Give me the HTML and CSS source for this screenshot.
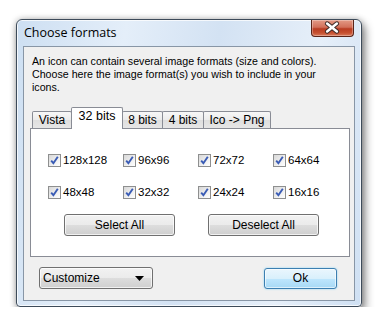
FILE: index.html
```html
<!DOCTYPE html>
<html>
<head>
<meta charset="utf-8">
<link rel="stylesheet" href="styles.css">
</head>
<body>
<div class="window">
  <div class="titlebar">
    <span class="title">Choose formats</span>
    <div class="close">
      <svg width="43" height="17" viewBox="0 0 43 17">
        <path d="M16.5 4.5 L26.5 12.5 M26.5 4.5 L16.5 12.5" stroke="#3b2a28" stroke-width="4.6" stroke-linecap="round"/>
        <path d="M16.5 4.5 L26.5 12.5 M26.5 4.5 L16.5 12.5" stroke="#ffffff" stroke-width="2.6" stroke-linecap="round"/>
      </svg>
    </div>
  </div>
  <div class="client">
    <p class="intro">An icon can contain several image formats (size and colors).<br>Choose here the image format(s) you wish to include in your<br>icons.</p>
    <div class="tabs">
      <div class="tab w40">Vista</div>
      <div class="tab active">32 bits</div>
      <div class="tab w41">8 bits</div>
      <div class="tab w42">4 bits</div>
      <div class="tab w68">Ico -&gt; Png</div>
    </div>
    <div class="panel">
      <div class="grid">
        <label class="cb"><span class="box"><svg width="11" height="11" viewBox="0 0 11 11"><path d="M2.2 5.6 L4.4 8.2 L8.8 1.8" fill="none" stroke="#3a5cb5" stroke-width="1.9"/></svg></span>128x128</label>
        <label class="cb"><span class="box"><svg width="11" height="11" viewBox="0 0 11 11"><path d="M2.2 5.6 L4.4 8.2 L8.8 1.8" fill="none" stroke="#3a5cb5" stroke-width="1.9"/></svg></span>96x96</label>
        <label class="cb"><span class="box"><svg width="11" height="11" viewBox="0 0 11 11"><path d="M2.2 5.6 L4.4 8.2 L8.8 1.8" fill="none" stroke="#3a5cb5" stroke-width="1.9"/></svg></span>72x72</label>
        <label class="cb"><span class="box"><svg width="11" height="11" viewBox="0 0 11 11"><path d="M2.2 5.6 L4.4 8.2 L8.8 1.8" fill="none" stroke="#3a5cb5" stroke-width="1.9"/></svg></span>64x64</label>
        <label class="cb"><span class="box"><svg width="11" height="11" viewBox="0 0 11 11"><path d="M2.2 5.6 L4.4 8.2 L8.8 1.8" fill="none" stroke="#3a5cb5" stroke-width="1.9"/></svg></span>48x48</label>
        <label class="cb"><span class="box"><svg width="11" height="11" viewBox="0 0 11 11"><path d="M2.2 5.6 L4.4 8.2 L8.8 1.8" fill="none" stroke="#3a5cb5" stroke-width="1.9"/></svg></span>32x32</label>
        <label class="cb"><span class="box"><svg width="11" height="11" viewBox="0 0 11 11"><path d="M2.2 5.6 L4.4 8.2 L8.8 1.8" fill="none" stroke="#3a5cb5" stroke-width="1.9"/></svg></span>24x24</label>
        <label class="cb"><span class="box"><svg width="11" height="11" viewBox="0 0 11 11"><path d="M2.2 5.6 L4.4 8.2 L8.8 1.8" fill="none" stroke="#3a5cb5" stroke-width="1.9"/></svg></span>16x16</label>
      </div>
      <div class="btnrow">
        <div class="btn">Select All</div>
        <div class="btn">Deselect All</div>
      </div>
    </div>
    <div class="footer">
      <div class="combo"><span>Customize</span><svg width="9" height="5" viewBox="0 0 9 5"><path d="M0 0 H9 L4.5 5 Z" fill="#000"/></svg></div>
      <div class="ok">Ok</div>
    </div>
  </div>
</div>
</body>
</html>
```

FILE: styles.css
```css
html, body {
  margin: 0;
  background: #ffffff;
}
body {
  padding: 19px 0 0 16px;
  font-family: "Liberation Sans", Arial, sans-serif;
  font-size: 11px;
  color: #000;
}
.window {
  box-sizing: border-box;
  width: 346px;
  height: 288px;
  border: 1px solid #3d4b5a;
  border-radius: 6px 6px 4px 4px;
  padding: 0 6px 5px 6px;
  display: flex;
  flex-direction: column;
  background: linear-gradient(100deg, #cddff2 0%, #e4eef9 28%, #d3e2f3 52%, #e6eff9 78%, #cfe0f3 100%);
  box-shadow: inset 0 0 0 1px rgba(255,255,255,0.75), 3px 5px 10px rgba(0,0,0,0.45), 0 0 6px rgba(0,0,0,0.25);
}
.titlebar {
  height: 26px;
  display: flex;
  justify-content: space-between;
  align-items: flex-start;
}
.title {
  font-family: "Open Sans", "Noto Sans", sans-serif;
  font-size: 12.5px;
  line-height: 16px;
  padding: 5px 0 0 1px;
  color: #000;
}
.close {
  width: 43px;
  height: 17px;
  box-sizing: border-box;
  margin-right: 1px;
  border: 1px solid #5a2418;
  border-top: none;
  border-radius: 0 0 4px 4px;
  background: linear-gradient(to bottom, #e39a86 0%, #d2705a 45%, #b93c22 55%, #c6502f 80%, #d97a5c 100%);
  box-shadow: inset 0 0 0 1px rgba(255,255,255,0.3);
  display: flex;
}
.close svg {
  margin: -1px 0 0 -1px;
}
.client {
  flex: 1;
  border: 1px solid #8896a6;
  background: #f0f0f0;
  display: flex;
  flex-direction: column;
}
.intro {
  margin: 0;
  padding: 8px 8px 0 8px;
  font-size: 10.65px;
  line-height: 13px;
  white-space: nowrap;
}
.tabs {
  display: flex;
  align-items: flex-end;
  height: 21px;
  margin: 13px 0 0 8px;
  position: relative;
  z-index: 1;
}
.tab {
  box-sizing: border-box;
  height: 17px;
  border: 1px solid #898c95;
  border-bottom: none;
  border-radius: 2px 2px 0 0;
  background: linear-gradient(to bottom, #f7f7f7 0%, #ebebeb 50%, #dedede 51%, #e6e6e6 100%);
  font-size: 12px;
  line-height: 16px;
  text-align: center;
  margin-left: -1px;
  color: #000;
}
.tab:first-child { margin-left: 0; }
.w40 { width: 40px; }
.w41 { width: 41px; }
.w42 { width: 42px; }
.w68 { width: 68px; }
.tab.active {
  width: 52px;
  height: 22px;
  margin-bottom: -1px;
  background: #ffffff;
  line-height: 17px;
  font-size: 12.5px;
  position: relative;
  z-index: 2;
}
.panel {
  box-sizing: border-box;
  height: 129px;
  margin: 0 4px 0 6px;
  border: 1px solid #898c95;
  background: #ffffff;
  padding: 24px 0 0 17px;
}
.grid {
  display: grid;
  grid-template-columns: repeat(4, 75px);
  row-gap: 18px;
}
.cb {
  display: flex;
  align-items: center;
  height: 14px;
  gap: 2px;
  font-size: 11.5px;
  color: #000;
}
.box {
  box-sizing: border-box;
  width: 13px;
  height: 13px;
  border: 1px solid #8e8f8f;
  background: linear-gradient(135deg, #d8d8d8 0%, #f4f4f4 70%, #ffffff 100%);
  display: flex;
  align-items: center;
  justify-content: center;
}
.btnrow {
  display: flex;
  gap: 33px;
  margin: 15px 0 0 16px;
}
.btn, .combo, .ok {
  box-sizing: border-box;
  border-radius: 3px;
  font-size: 12px;
  display: flex;
  align-items: center;
  color: #000;
}
.btn {
  width: 111px;
  height: 22px;
  justify-content: center;
  border: 1px solid #707070;
  background: linear-gradient(to bottom, #f2f2f2 0%, #ebebeb 50%, #dddddd 51%, #cfcfcf 100%);
  box-shadow: inset 0 0 0 1px rgba(255,255,255,0.7);
}
.footer {
  display: flex;
  justify-content: space-between;
  align-items: center;
  margin: 10px 17px 0 15px;
}
.combo {
  width: 114px;
  height: 22px;
  border: 1px solid #707070;
  background: linear-gradient(to bottom, #f2f2f2 0%, #ebebeb 50%, #dddddd 51%, #cfcfcf 100%);
  box-shadow: inset 0 0 0 1px rgba(255,255,255,0.7);
  justify-content: space-between;
  padding: 0 8px 0 3px;
}
.combo svg { display: block; }
.ok {
  width: 73px;
  height: 21px;
  justify-content: center;
  border: 1px solid #3c7fb1;
  background: linear-gradient(to bottom, #eaf6fd 0%, #d9f0fc 50%, #bee6fd 51%, #a7d9f5 100%);
  box-shadow: inset 0 0 0 1px rgba(255,255,255,0.6), 0 0 2px #7fd0f5;
}
```
